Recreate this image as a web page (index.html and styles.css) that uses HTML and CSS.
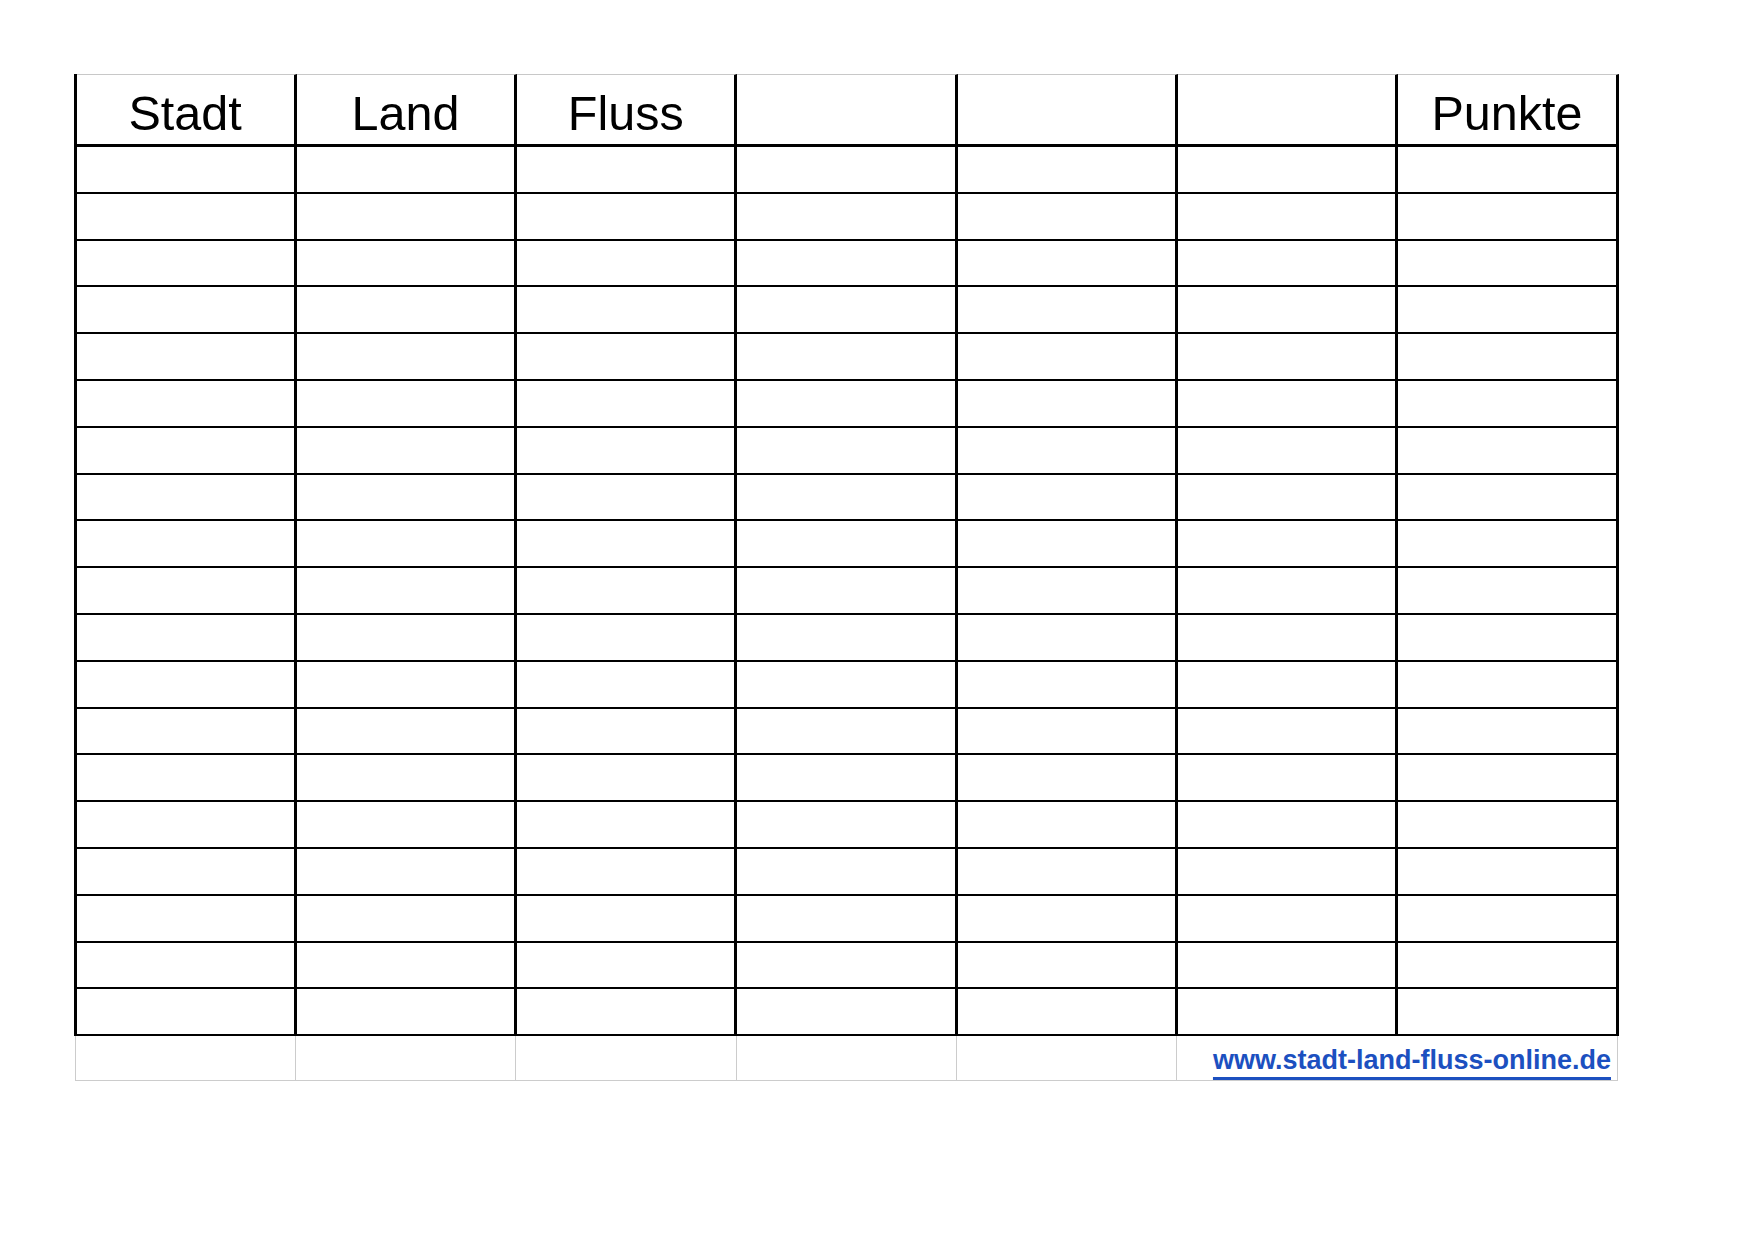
FILE: index.html
```html
<!DOCTYPE html>
<html lang="de">
<head>
<meta charset="utf-8">
<title>Stadt Land Fluss</title>
<link rel="stylesheet" href="styles.css">
</head>
<body>
<div class="sheet">
  <div class="grid main" id="main">
    <div class="cell head">Stadt</div>
    <div class="cell head">Land</div>
    <div class="cell head">Fluss</div>
    <div class="cell head"></div>
    <div class="cell head"></div>
    <div class="cell head"></div>
    <div class="cell head">Punkte</div>
  </div>
  <div class="grid foot">
    <div class="fcell"></div>
    <div class="fcell"></div>
    <div class="fcell"></div>
    <div class="fcell"></div>
    <div class="fcell"></div>
    <div class="fcell link-cell"><a class="link" href="#">www.stadt-land-fluss-online.de</a></div>
  </div>
</div>
<script>
  (function () {
    var main = document.getElementById('main');
    for (var r = 0; r < 19; r++) {
      for (var c = 0; c < 7; c++) {
        var d = document.createElement('div');
        d.className = 'cell row';
        main.appendChild(d);
      }
    }
  })();
</script>
</body>
</html>
```

FILE: styles.css
```css
html, body {
  margin: 0;
  padding: 0;
  background: #ffffff;
}

body {
  font-family: "Liberation Sans", Arial, sans-serif;
}

.sheet {
  padding: 74px 0 0 73.5px;
  width: 1548px;
}

.grid {
  display: grid;
  grid-template-columns: repeat(7, 220.3px);
}

.main {
  border-left: 3px solid #000;
}

.cell {
  box-sizing: border-box;
  border-right: 3px solid #000;
  border-bottom: 2px solid #000;
}

.head {
  height: 73px;
  border-top: 1px solid #c8c8c8;
  border-bottom: 3px solid #000;
  padding-top: 14px;
  font-size: 48.5px;
  line-height: 1;
  text-align: center;
  color: #000;
}

.row {
  height: 46.8px;
}

.foot {
  border-left: 1px solid #cccccc;
  margin-left: 1.5px;
  grid-template-columns: 220.2px repeat(4, 220.3px) 440.6px;
}

.fcell {
  box-sizing: border-box;
  height: 45px;
  border-right: 1px solid #cccccc;
  border-bottom: 1px solid #cccccc;
}

.link-cell {
  display: flex;
  justify-content: flex-end;
  align-items: flex-end;
  padding: 0 6px 6.5px 0;
}

.link {
  font-size: 27px;
  line-height: 1;
  font-weight: bold;
  color: #1c50c0;
  text-decoration: underline;
  text-decoration-thickness: 3px;
  text-underline-offset: 8px;
}
```
